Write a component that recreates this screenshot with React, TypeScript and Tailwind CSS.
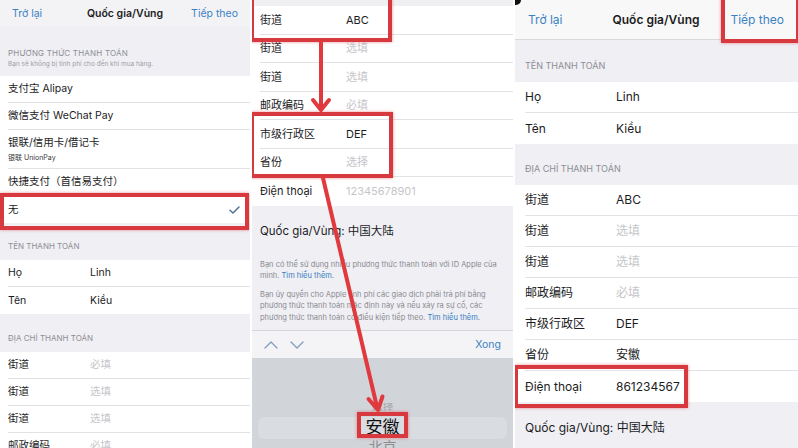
import type { ReactNode } from 'react'

const FONT = "font-['Inter','Noto_Sans_CJK_SC',sans-serif]"
const BLUE = 'text-[#3b82c4]'

// ── small drawings ────────────────────────────────────────────────────────────

function Check() {
  return (
    <svg width="11" height="8" viewBox="0 0 11 8" fill="none">
      <polyline points="1,4.2 4,7 10,1" stroke="#4f7196" strokeWidth="1.5" strokeLinecap="round" strokeLinejoin="round" />
    </svg>
  )
}

function Chevron({ up }: { up?: boolean }) {
  return (
    <svg width="14" height="8" viewBox="0 0 14 8" fill="none">
      <polyline
        points={up ? '1,7 7,1 13,7' : '1,1 7,7 13,1'}
        stroke="#7d9cc0"
        strokeWidth="1.3"
        strokeLinecap="round"
        strokeLinejoin="round"
      />
    </svg>
  )
}

function RedBox({ className }: { className: string }) {
  return (
    <div
      className={`absolute border-[4px] border-[#d8393f] shadow-[0_0_3px_rgba(216,57,63,0.55)] pointer-events-none ${className}`}
    />
  )
}

// ── rows ──────────────────────────────────────────────────────────────────────

type RowProps = {
  label: ReactNode
  value?: string
  placeholder?: boolean
  last?: boolean
  h: string
  pad: string
  labelW: string
  right?: ReactNode
}

function Row({ label, value, placeholder, last, h, pad, labelW, right }: RowProps) {
  return (
    <div className={pad}>
      <div className={`${h} flex items-center pr-2 ${last ? '' : 'border-b border-[#e2e2e6]'}`}>
        <div className={`${labelW} shrink-0 whitespace-nowrap`}>{label}</div>
        {value && (
          <div className={`flex-1 whitespace-nowrap ${placeholder ? 'text-[#c6c6ca]' : ''}`}>{value}</div>
        )}
        {right && <div className="ml-auto">{right}</div>}
      </div>
    </div>
  )
}

function NavBar({ className, title }: { className: string; title: string }) {
  return (
    <div className={`grid grid-cols-[1fr_auto_1fr] items-center ${className}`}>
      <span className={BLUE}>Trở lại</span>
      <span className="font-semibold">{title}</span>
      <span className={`${BLUE} text-right`}>Tiếp theo</span>
    </div>
  )
}

// ── panel 1 ───────────────────────────────────────────────────────────────────

function PanelPayment() {
  const r = { h: 'h-[27px]', pad: 'pl-2', labelW: 'w-[82px]' }
  return (
    <div className="relative w-[250px] h-[448px] shrink-0 bg-[#efeff4] text-[10.5px] text-[#1c1c1e] overflow-hidden">
      <NavBar className="h-[27px] px-3 bg-[#f3f3f5]" title="Quốc gia/Vùng" />
      <div className="h-[49px] flex flex-col justify-end pb-[6px] px-2">
        <div className="text-[8px] text-[#8e8e93] tracking-[0.2px]">PHƯƠNG THỨC THANH TOÁN</div>
        <div className="text-[6.5px] text-[#a0a0a5] mt-[1px]">Bạn sẽ không bị tính phí cho đến khi mua hàng.</div>
      </div>
      <div className="bg-white">
        <Row {...r} label="支付宝 Alipay" />
        <Row {...r} label="微信支付 WeChat Pay" />
        <div className="pl-2">
          <div className="h-[39px] flex flex-col justify-center border-b border-[#e2e2e6]">
            <div>银联/信用卡/借记卡</div>
            <div className="text-[7px] text-[#3a3a3c] mt-[2px]">银联 UnionPay</div>
          </div>
        </div>
        <Row {...r} label="快捷支付（首信易支付）" />
        <Row {...r} label="无" last right={<div className="pr-[2px]"><Check /></div>} />
      </div>
      <div className="h-[37px] flex items-end pb-[8px] px-2 text-[8px] text-[#8e8e93]">TÊN THANH TOÁN</div>
      <div className="bg-white">
        <Row {...r} label="Họ" value="Linh" />
        <Row {...r} label="Tên" value="Kiều" last />
      </div>
      <div className="h-[38px] flex items-end pb-[8px] px-2 text-[8px] text-[#8e8e93]">ĐỊA CHỈ THANH TOÁN</div>
      <div className="bg-white h-[120px]">
        <Row {...r} label="街道" value="必填" placeholder />
        <Row {...r} label="街道" value="选填" placeholder />
        <Row {...r} label="街道" value="选填" placeholder />
        <Row {...r} label="邮政编码" value="必填" placeholder />
      </div>

      <RedBox className="left-0 right-[1px] top-[193px] h-[37px]" />
    </div>
  )
}

// ── panel 2 ───────────────────────────────────────────────────────────────────

function PanelPicker() {
  const r = { h: 'h-[28.5px]', pad: 'pl-2', labelW: 'w-[86px]' }
  return (
    <div className="relative w-[261px] h-[448px] shrink-0 bg-[#efeff4] text-[11px] text-[#1c1c1e] overflow-hidden">
      <div className="h-[6px] bg-[#f0f0f2]" />
      <div className="bg-white">
        <Row {...r} label="街道" value="ABC" />
        <Row {...r} label="街道" value="选填" placeholder />
        <Row {...r} label="街道" value="选填" placeholder />
        <Row {...r} label="邮政编码" value="必填" placeholder />
        <Row {...r} label="市级行政区" value="DEF" />
        <Row {...r} label="省份" value="选择" placeholder />
        <Row {...r} label="Điện thoại" value="12345678901" placeholder last />
      </div>
      <div className="px-2 pt-[17px]">
        <div className="text-[11.5px] leading-[16px]">Quốc gia/Vùng: 中国大陆</div>
        <div className="mt-[20px] text-[7.5px] leading-[11.5px] text-[#8a8a8f] whitespace-nowrap">
          Bạn có thể sử dụng nhiều phương thức thanh toán với ID Apple của
          <br />
          mình. <span className="text-[#3a7dc0]">Tìm hiểu thêm.</span>
        </div>
        <div className="mt-[7px] text-[7.5px] leading-[11.5px] text-[#8a8a8f] whitespace-nowrap">
          Bạn ủy quyền cho Apple tính phí các giao dịch phải trả phí bằng
          <br />
          phương thức thanh toán mặc định này và nếu xảy ra sự cố, các
          <br />
          phương thức thanh toán có điều kiện tiếp theo. <span className="text-[#3a7dc0]">Tìm hiểu thêm.</span>
        </div>
      </div>
      <div className="mt-[7px] h-[28px] border-t border-[#d6d6da] bg-[#f4f4f6] flex items-center px-3 gap-3">
        <Chevron up />
        <Chevron />
        <span className={`ml-auto text-[10.5px] ${BLUE}`}>Xong</span>
      </div>
      <div className="h-[100px] bg-[#d1d4d9] flex flex-col items-center pt-[42px]">
        <div className="h-[14px] leading-[14px] text-[11px] text-[#a4a6aa] scale-y-75">选择</div>
        <div className="mt-[3px] h-[22px] self-stretch mx-[6px] rounded-md bg-[#d9dce0] flex items-center justify-center text-[17px] text-[#111]">
          安徽
        </div>
        <div className="h-[16px] leading-[16px] text-[14px] text-[#8a8c90]">北京</div>
      </div>

      <RedBox className="left-[-2px] top-[-4px] w-[142px] h-[46px]" />
      <RedBox className="left-[-2px] top-[112px] w-[143px] h-[66px]" />
      <RedBox className="left-[105px] top-[412px] w-[51px] h-[26px]" />

      <svg className="absolute inset-0 pointer-events-none" width="261" height="448" viewBox="0 0 261 448" fill="none">
        <g stroke="#e0393e" strokeWidth="4" strokeLinecap="round" strokeLinejoin="round">
          <line x1="69" y1="42" x2="69" y2="109" />
          <polyline points="61,100 69,110 77,100" />
          <line x1="71" y1="178" x2="125" y2="407" />
          <polyline points="116.5,399 126,410 130.5,396.5" />
        </g>
      </svg>
    </div>
  )
}

// ── panel 3 ───────────────────────────────────────────────────────────────────

function PanelResult() {
  const r = { h: 'h-[31px]', pad: 'pl-[10px]', labelW: 'w-[91px]' }
  return (
    <div className="relative flex-1 h-[448px] bg-[#efeff4] text-[12px] text-[#1c1c1e] overflow-hidden">
      <NavBar className="h-[40px] pl-[13px] pr-[14px] bg-[#f8f8f9] border-b border-[#d9d9dc] text-[12px]" title="Quốc gia/Vùng" />
      <div className="h-[42px] flex items-end pb-[10px] px-[10px] text-[9px] text-[#8e8e93]">TÊN THANH TOÁN</div>
      <div className="bg-white">
        <Row {...r} label="Họ" value="Linh" />
        <Row {...r} label="Tên" value="Kiều" last />
      </div>
      <div className="h-[41px] flex items-end pb-[10px] px-[10px] text-[9px] text-[#8e8e93]">ĐỊA CHỈ THANH TOÁN</div>
      <div className="bg-white">
        <Row {...r} label="街道" value="ABC" />
        <Row {...r} label="街道" value="选填" placeholder />
        <Row {...r} label="街道" value="选填" placeholder />
        <Row {...r} label="邮政编码" value="必填" placeholder />
        <Row {...r} label="市级行政区" value="DEF" />
        <Row {...r} label="省份" value="安徽" />
        <Row {...r} label="Điện thoại" value="861234567" last />
      </div>
      <div className="px-[10px] pt-[17px] text-[12px]">Quốc gia/Vùng: 中国大陆</div>

      <div className="absolute left-0 top-0 w-[6px] h-[5px] bg-[#111] rounded-br-[5px]" />
      <RedBox className="right-[-2px] top-[-4px] w-[79px] h-[47px]" />
      <RedBox className="left-[-1px] top-[365px] w-[174px] h-[43px]" />
    </div>
  )
}

export default function App() {
  return (
    <div className={`w-[798px] h-[448px] flex gap-[2px] bg-white overflow-hidden ${FONT}`}>
      <PanelPayment />
      <PanelPicker />
      <PanelResult />
    </div>
  )
}
